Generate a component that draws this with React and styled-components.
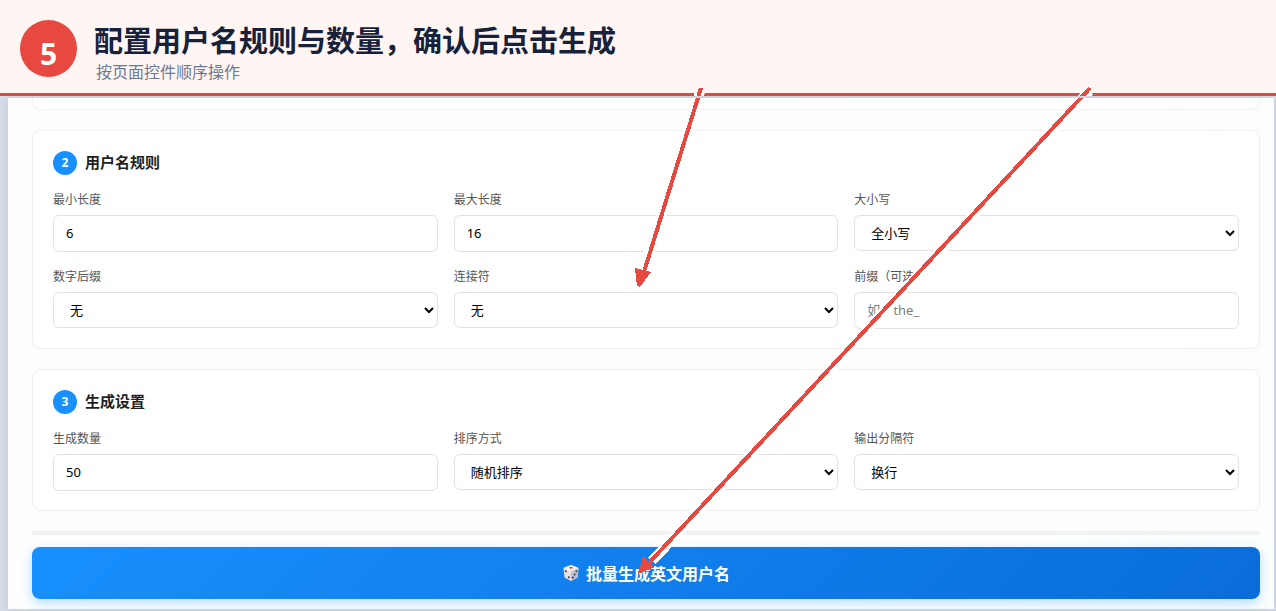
import React, { useId } from "react";
import styled, { createGlobalStyle } from "styled-components";

const GlobalStyle = createGlobalStyle`
  *, *::before, *::after { box-sizing: border-box; }
  body {
    margin: 0;
    background: #d6dde8;
    color: #1f1f1f;
    font-family: "Noto Sans", "Noto Sans CJK SC", sans-serif;
  }
`;

const Page = styled.div`
  position: relative;
  overflow: hidden;
`;

const StepHeader = styled.header`
  display: flex;
  align-items: center;
  gap: 17px;
  height: 96px;
  padding: 0 20px;
  background: #fff6f3;
  border-bottom: 3px solid #e7483f;
`;

const StepNumber = styled.span`
  display: flex;
  align-items: center;
  justify-content: center;
  width: 57px;
  height: 57px;
  padding-top: 10px;
  margin-top: 4px;
  border-radius: 50%;
  background: #e7483f;
  color: #fff;
  font-size: 30px;
  font-weight: 700;
  line-height: 40px;
`;

const StepText = styled.div`
  display: flex;
  flex-direction: column;
  padding-top: 8px;
`;

const StepTitle = styled.h1`
  margin: 0;
  color: #17213a;
  font-family: "Noto Sans CJK SC", sans-serif;
  font-size: 29px;
  font-weight: 700;
  line-height: 40px;
`;

const StepSubtitle = styled.p`
  margin: 0;
  padding-left: 2px;
  color: #6b7a94;
  font-family: "Noto Sans CJK SC", sans-serif;
  font-size: 16px;
  line-height: 24px;
`;

const Frame = styled.div`
  padding: 2px 2px 2px 8px;
`;

const Panel = styled.main`
  padding: 0 14px 10px 24px;
  background: linear-gradient(90deg, #fefefe 60%, #fcfefd);
  box-shadow: 0 0 8px rgba(90, 110, 140, 0.2);
`;

const Card = styled.section`
  margin-bottom: 20px;
  padding: 20px 20px 19px;
  background: #fff;
  border: 1px solid #eeeff0;
  border-radius: 8px;
`;

const CardEnd = styled.div`
  height: 12px;
  margin-bottom: 20px;
  background: #fff;
  border: 1px solid #eeeff0;
  border-top: 0;
  border-radius: 0 0 8px 8px;
`;

const CardTitle = styled.h2`
  display: flex;
  align-items: center;
  gap: 8px;
  margin: 0 0 16px;
  font-size: 15px;
  font-weight: 700;
  line-height: 22px;
`;

const CardName = styled.span`
  height: 24px;
`;

const Badge = styled.span`
  width: 24px;
  height: 24px;
  border-radius: 50%;
  background: #1890ff;
  color: #fff;
  font-size: 12px;
  line-height: 24px;
  text-align: center;
`;

const Fields = styled.div`
  display: grid;
  grid-template-columns: repeat(3, 1fr);
  gap: 16px;
`;

const FieldBox = styled.div`
  display: flex;
  flex-direction: column;
  gap: 6px;
`;

const Label = styled.label`
  color: #555;
  font-size: 12px;
  line-height: 18px;
`;

const Input = styled.input`
  width: 100%;
  height: 37px;
  padding: 0 12px 2px;
  border: 1px solid #e2e2e2;
  border-radius: 6px;
  background: #fff;
  color: #000;
  font-family: inherit;
  font-size: 13px;
  &::placeholder { color: #808080; }
`;

const Select = styled.select`
  width: 100%;
  height: 36px;
  padding: 0 0 0 12px;
  border: 1px solid #e2e2e2;
  border-radius: 6px;
  background: #fff;
  color: #000;
  font-family: inherit;
  font-size: 13px;
`;

const Divider = styled.hr`
  height: 4px;
  margin: 0 0 12px;
  border: 0;
  background: #f1f2f5;
`;

const GenerateButton = styled.button`
  display: flex;
  align-items: center;
  justify-content: center;
  gap: 6px;
  width: 100%;
  height: 52px;
  border: 0;
  border-radius: 8px;
  background: linear-gradient(135deg, #1890ff, #096dd9);
  box-shadow: 0 4px 12px rgba(24, 144, 255, 0.3);
  color: #fff;
  font-family: inherit;
  font-size: 16px;
  font-weight: 700;
`;

const Arrows = styled.svg`
  position: absolute;
  top: 0;
  left: 50%;
  width: 1276px;
  height: 611px;
  transform: translateX(-50%);
  pointer-events: none;
`;

function TextField({ label, ...rest }) {
  const id = useId();
  return (
    <FieldBox>
      <Label htmlFor={id}>{label}</Label>
      <Input id={id} type="text" {...rest} />
    </FieldBox>
  );
}

function SelectField({ label, options }) {
  const id = useId();
  return (
    <FieldBox>
      <Label htmlFor={id}>{label}</Label>
      <Select id={id}>
        {options.map((o) => <option key={o}>{o}</option>)}
      </Select>
    </FieldBox>
  );
}

function Dice() {
  return (
    <svg width="18" height="18" viewBox="0 0 18 18" aria-hidden="true">
      <path d="M9 1 16.500 4 15.500 13.500 9 17 2.500 13.500 1.500 4Z" fill="#e4e2e6" />
      <path d="M9 1 16.500 4 9 7.500 1.500 4Z" fill="#f8f5f5" />
      <path d="M9 7.500 16.500 4 15.500 13.500 9 17Z" fill="#c3c2cd" />
      <ellipse cx="9" cy="3.800" rx="1.900" ry="1" fill="#d8553f" />
      <g fill="#39374a">
        <circle cx="3.800" cy="7.300" r="1" />
        <circle cx="6.800" cy="13.300" r="1" />
        <circle cx="14.400" cy="7.300" r="1" />
        <circle cx="12.600" cy="10.400" r="1" />
        <circle cx="10.900" cy="13.600" r="1" />
      </g>
    </svg>
  );
}

export default function App() {
  return (
    <Page>
      <GlobalStyle />
      <StepHeader>
        <StepNumber>5</StepNumber>
        <StepText>
          <StepTitle>配置用户名规则与数量，确认后点击生成</StepTitle>
          <StepSubtitle>按页面控件顺序操作</StepSubtitle>
        </StepText>
      </StepHeader>
      <Frame>
        <Panel>
          <CardEnd />
          <Card>
            <CardTitle><Badge>2</Badge><CardName>用户名规则</CardName></CardTitle>
            <Fields>
              <TextField label="最小长度" defaultValue="6" />
              <TextField label="最大长度" defaultValue="16" />
              <SelectField label="大小写" options={["全小写"]} />
              <SelectField label="数字后缀" options={["无"]} />
              <SelectField label="连接符" options={["无"]} />
              <TextField label="前缀（可选）" placeholder="如：the_" />
            </Fields>
          </Card>
          <Card>
            <CardTitle><Badge>3</Badge><CardName>生成设置</CardName></CardTitle>
            <Fields>
              <TextField label="生成数量" defaultValue="50" />
              <SelectField label="排序方式" options={["随机排序"]} />
              <SelectField label="输出分隔符" options={["换行"]} />
            </Fields>
          </Card>
          <Divider />
          <GenerateButton type="button"><Dice />批量生成英文用户名</GenerateButton>
        </Panel>
      </Frame>
      <Arrows viewBox="0 0 1276 611" aria-hidden="true">
        <clipPath id="below-and-above-rule">
          <path d="M0 0H1276V96H0ZM0 98H1276V611H0Z" />
        </clipPath>
        <g clipPath="url(#below-and-above-rule)" shapeRendering="crispEdges">
          <g stroke="#fff" strokeWidth="10">
            <path d="M700 92 642 276" />
            <path d="M1089 91 652 561" />
          </g>
          <g stroke="#e7483f" strokeWidth="4">
            <path d="M701 88 643 275" />
            <path d="M1090 88 648 564" />
          </g>
          <path d="M635 268 651 272 640 287 637 286Z" fill="#e7483f" />
          <path d="M643 556 655 567 638 574Z" fill="#e7483f" />
        </g>
      </Arrows>
    </Page>
  );
}
